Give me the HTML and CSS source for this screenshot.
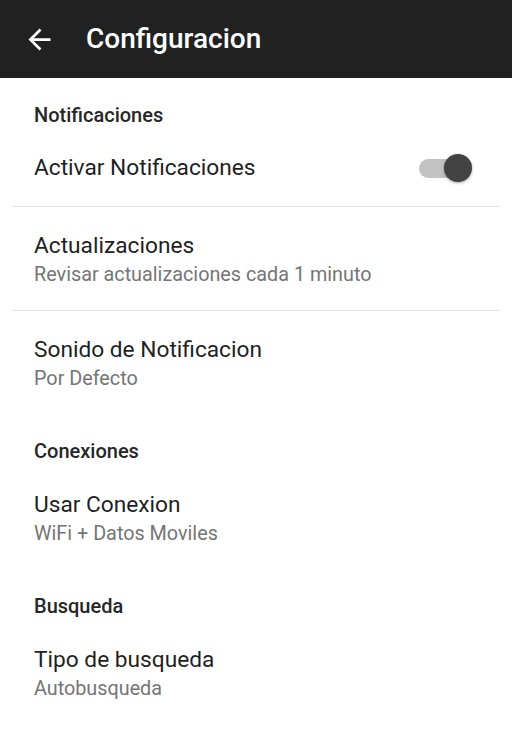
FILE: index.html
```html
<!DOCTYPE html>
<html lang="es">
<head>
<meta charset="utf-8">
<link rel="stylesheet" href="styles.css">
</head>
<body>
<header class="toolbar">
  <svg class="back" viewBox="0 0 24 24" width="33" height="33"><path d="M20 11H7.83l5.59-5.59L12 4l-8 8 8 8 1.41-1.41L7.83 13H20v-2z" fill="#fff"/></svg>
  <h1 class="title">Configuracion</h1>
</header>
<main class="list">
  <div class="category">Notificaciones</div>
  <div class="item item-first row">
    <div class="item-title">Activar Notificaciones</div>
    <div class="switch"><span class="track"></span><span class="thumb"></span></div>
  </div>
  <div class="divider"></div>
  <div class="item">
    <div class="item-title">Actualizaciones</div>
    <div class="item-summary">Revisar actualizaciones cada 1 minuto</div>
  </div>
  <div class="divider"></div>
  <div class="item">
    <div class="item-title">Sonido de Notificacion</div>
    <div class="item-summary">Por Defecto</div>
  </div>
  <div class="category">Conexiones</div>
  <div class="item item-first">
    <div class="item-title">Usar Conexion</div>
    <div class="item-summary">WiFi + Datos Moviles</div>
  </div>
  <div class="category">Busqueda</div>
  <div class="item item-first">
    <div class="item-title">Tipo de busqueda</div>
    <div class="item-summary">Autobusqueda</div>
  </div>
</main>
</body>
</html>
```
FILE: styles.css
```css
* { box-sizing: border-box; }
html, body { margin: 0; padding: 0; background: #fff; }
body {
  width: 512px;
  height: 745px;
  overflow: hidden;
  font-family: Roboto, "Noto Sans", sans-serif;
}
.toolbar {
  height: 78px;
  background: #212121;
  display: flex;
  align-items: center;
  padding-left: 23px;
}
.back { display: block; flex: none; }
.title {
  margin: 0 0 0 30px;
  color: #fff;
  font-size: 28px;
  font-weight: 500;
  line-height: 32px;
}
.category {
  padding: 25px 34px 7px;
  font-size: 20px;
  font-weight: 500;
  line-height: 24px;
  color: #262626;
}
.item {
  padding: 25px 34px 23px;
}
.item-first { padding-top: 21px; }
.row {
  display: flex;
  align-items: center;
  justify-content: space-between;
  padding-right: 40px;
}
.row.item-first { padding-top: 20px; padding-bottom: 24px; }
.item-title {
  font-size: 22.7px;
  line-height: 28px;
  color: #1f1f1f;
}
.item-summary {
  margin-top: 3px;
  font-size: 19.8px;
  line-height: 24px;
  color: #757575;
}
.divider {
  height: 1px;
  margin: 0 12px;
  background: #e4e4e4;
}
.switch {
  position: relative;
  width: 53px;
  height: 28px;
  flex: none;
}
.track {
  position: absolute;
  left: 0;
  top: 5px;
  width: 51px;
  height: 19px;
  border-radius: 10px;
  background: #c2c2c2;
}
.thumb {
  position: absolute;
  right: 0;
  top: 0;
  width: 28px;
  height: 28px;
  border-radius: 50%;
  background: #424242;
  box-shadow: 0 1px 3px rgba(0,0,0,0.35);
}
```
